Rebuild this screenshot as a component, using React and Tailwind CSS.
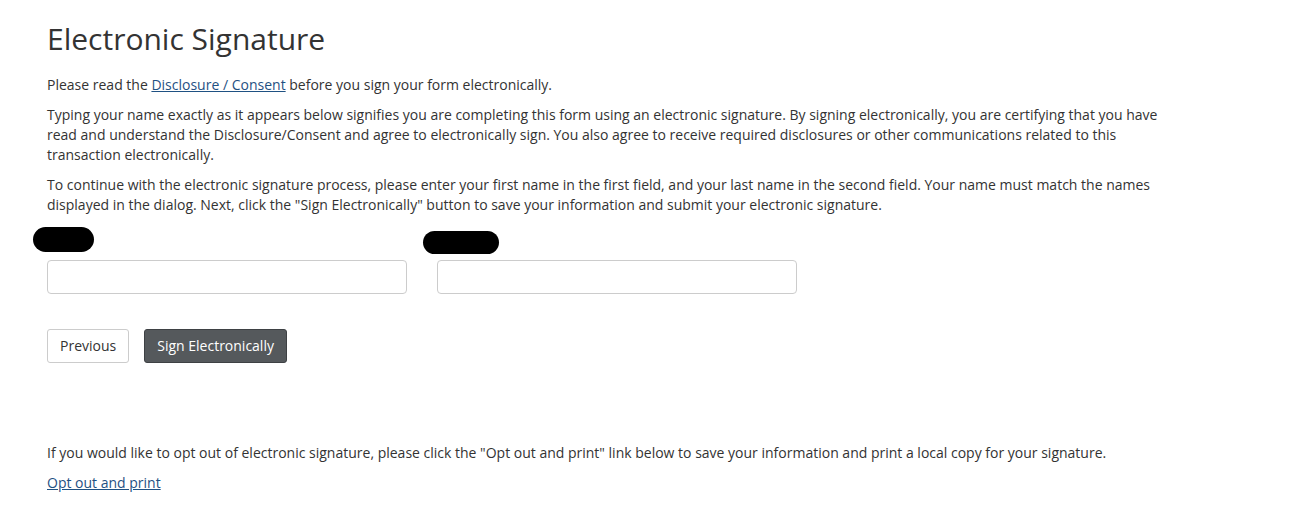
import React from "react";

const Redacted = ({ className }) => (
  <div className={`bg-black rounded-full ${className}`} />
);

const App = () => {
  return (
    <div
      className="min-h-[522px] bg-white text-[#333333] pl-[47px] pt-[22px] text-[14px] leading-[20px]"
      style={{ fontFamily: '"Open Sans", "Liberation Sans", sans-serif' }}
    >
      <div className="w-[1135px]">
        <h1 className="text-[30px] leading-[33px] font-normal text-[#333333]">
          Electronic Signature
        </h1>
        <p className="mt-[20px]">
          Please read the{" "}
          <a href="#" className="text-[#1f5183] underline">
            Disclosure / Consent
          </a>{" "}
          before you sign your form electronically.
        </p>
        <p className="mt-[10px]">
          Typing your name exactly as it appears below signifies you are
          completing this form using an electronic signature. By signing
          electronically, you are certifying that you have read and understand
          the Disclosure/Consent and agree to electronically sign. You also
          agree to receive required disclosures or other communications related
          to this transaction electronically.
        </p>
        <p className="mt-[10px]">
          To continue with the electronic signature process, please enter your
          first name in the first field, and your last name in the second
          field. Your name must match the names displayed in the dialog. Next,
          click the "Sign Electronically" button to save your information and
          submit your electronic signature.
        </p>

        <div className="flex gap-[30px]">
          <div className="flex flex-col">
            <div className="h-[45px]">
              <Redacted className="mt-[12px] -ml-[14px] h-[25px] w-[61px]" />
            </div>
            <input
              type="text"
              className="h-[34px] w-[360px] border border-[#cccccc] rounded-[4px] px-3 outline-none"
            />
          </div>
          <div className="flex flex-col">
            <div className="h-[45px]">
              <Redacted className="mt-[16px] -ml-[14px] h-[23px] w-[76px]" />
            </div>
            <input
              type="text"
              className="h-[34px] w-[360px] border border-[#cccccc] rounded-[4px] px-3 outline-none"
            />
          </div>
        </div>

        <div className="flex gap-[15px] mt-[35px]">
          <button className="h-[34px] px-3 border border-[#cccccc] rounded-[3px] bg-white text-[#333333]">
            Previous
          </button>
          <button className="h-[34px] px-3 border border-[#3e4144] rounded-[3px] bg-[#55595c] text-white">
            Sign Electronically
          </button>
        </div>

        <p className="mt-[80px]">
          If you would like to opt out of electronic signature, please click the
          "Opt out and print" link below to save your information and print a
          local copy for your signature.
        </p>
        <p className="mt-[10px]">
          <a href="#" className="text-[#1f5183] underline">
            Opt out and print
          </a>
        </p>
      </div>
    </div>
  );
};

export default App;
